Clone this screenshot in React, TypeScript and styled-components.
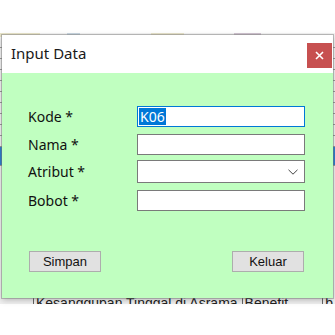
import React from 'react'
import styled, { createGlobalStyle } from 'styled-components'

const GlobalStyle = createGlobalStyle`
  html, body { margin: 0; padding: 0; background: #fff; }
  body { font-family: "Noto Sans", "Liberation Sans", sans-serif; }
`

const Screen = styled.div`
  position: relative;
  width: 335px;
  height: 335px;
  overflow: hidden;
  background: #fff;
`

const BackApp = styled.div`
  position: absolute;
  left: 0;
  top: 33px;
  width: 335px;
  height: 271px;
  overflow: hidden;
  background: #f0f0f0;
  display: flex;
  flex-direction: column;
`

const BackStrip = styled.div`
  height: 4px;
  background: linear-gradient(90deg, #e8e4c8 0 12%, #f3f3f3 12% 20%, #c9d6e0 20% 24%, #f3f3f3 24% 45%, #e6e2c9 45% 55%, #f3f3f3 55% 70%, #cfc3cf 70% 78%, #f3f3f3 78%);
`

const BackRow = styled.div<{ $selected?: boolean }>`
  height: ${p => p.$selected ? 18 : 10}px;
  border-bottom: 1px solid #9a9a9a;
  background: ${p => p.$selected ? '#2f7fd0' : '#f4f4f4'};
`

const BackText = styled.div`
  margin-top: auto;
  height: 14px;
  padding-left: 33px;
  display: flex;
  gap: 4px;
  font-family: "Liberation Sans", sans-serif;
  font-size: 14px;
  line-height: 14px;
  color: #222;
  white-space: nowrap;
  transform: translateY(6px);
  span { border-left: 1px solid #666; padding-left: 2px; }
`

const Window = styled.div`
  position: absolute;
  left: 2px;
  top: 35px;
  width: 331px;
  height: 263px;
  display: flex;
  flex-direction: column;
  box-shadow: 0 0 0 1px rgba(120, 120, 120, 0.45), 0 2px 6px rgba(0, 0, 0, 0.25);
`

const TitleBar = styled.div`
  height: 38px;
  background: #fff;
  display: flex;
  align-items: center;
  justify-content: space-between;
  padding-left: 9px;
  padding-right: 1px;
`

const Title = styled.div`
  font-family: "Noto Sans", sans-serif;
  font-size: 15px;
  color: #1a1a1a;
  margin-top: -2px;
`

const CloseButton = styled.div`
  width: 25px;
  height: 25px;
  margin-top: 3px;
  background: #c75050;
  display: flex;
  align-items: center;
  justify-content: center;
`

const Body = styled.div`
  flex: 1;
  background: #c0ffc0;
  padding: 33px 28px 0 26px;
  display: flex;
  flex-direction: column;
`

const Row = styled.div<{ $mt?: number }>`
  display: flex;
  align-items: center;
  margin-top: ${p => p.$mt ?? 0}px;
`

const Label = styled.div`
  width: 109px;
  flex-shrink: 0;
  font-family: "Noto Sans", sans-serif;
  font-size: 14px;
  color: #111;
`

const Field = styled.div<{ $focused?: boolean; $h?: number }>`
  box-sizing: border-box;
  width: 168px;
  flex-shrink: 0;
  height: ${p => p.$h ?? 21}px;
  border: 1px solid ${p => p.$focused ? '#0078d7' : '#7a7a7a'};
  background: #fff;
  display: flex;
  align-items: center;
  padding: 0 1px;
  justify-content: space-between;
`

const Selected = styled.span`
  background: #0078d7;
  color: #fff;
  font-family: "Noto Sans", sans-serif;
  font-size: 14px;
  line-height: 17px;
  padding: 0 1px;
`

const Buttons = styled.div`
  margin-top: 40px;
  display: flex;
  justify-content: space-between;
  padding: 0 1px 0 1px;
`

const Button = styled.div`
  width: 70px;
  height: 19px;
  background: #e1e1e1;
  border: 1px solid #adadad;
  display: flex;
  align-items: center;
  justify-content: center;
  font-family: "Liberation Sans", sans-serif;
  font-size: 13px;
  color: #111;
`

const CloseIcon = () => (
  <svg width="9" height="9" viewBox="0 0 9 9">
    <path d="M1 1 L8 8 M8 1 L1 8" stroke="#fff" strokeWidth="1.6" />
  </svg>
)

const Chevron = () => (
  <svg width="10" height="6" viewBox="0 0 10 6" style={{ marginRight: 5 }}>
    <path d="M0.5 0.8 L5 5.2 L9.5 0.8" fill="none" stroke="#444" strokeWidth="1" />
  </svg>
)

export default function App() {
  return (
    <Screen>
      <GlobalStyle />
      <BackApp>
        <BackStrip />
        <BackRow />
        <BackRow />
        <BackRow />
        <BackRow />
        <BackRow />
        <BackRow />
        <BackRow />
        <BackRow />
        <BackRow />
        <BackRow />
        <BackRow $selected />
        <BackText>
          <span>Kesanggupan Tinggal di Asrama</span>
          <span>Benefit</span>
          <span style={{ marginLeft: 30 }}>b</span>
        </BackText>
      </BackApp>
      <Window>
        <TitleBar>
          <Title>Input Data</Title>
          <CloseButton>
            <CloseIcon />
          </CloseButton>
        </TitleBar>
        <Body>
          <Row>
            <Label>Kode *</Label>
            <Field $focused>
              <Selected>K06</Selected>
            </Field>
          </Row>
          <Row $mt={7}>
            <Label>Nama *</Label>
            <Field />
          </Row>
          <Row $mt={5}>
            <Label>Atribut *</Label>
            <Field $h={23}>
              <span />
              <Chevron />
            </Field>
          </Row>
          <Row $mt={7}>
            <Label>Bobot *</Label>
            <Field />
          </Row>
          <Buttons>
            <Button>Simpan</Button>
            <Button>Keluar</Button>
          </Buttons>
        </Body>
      </Window>
    </Screen>
  )
}
